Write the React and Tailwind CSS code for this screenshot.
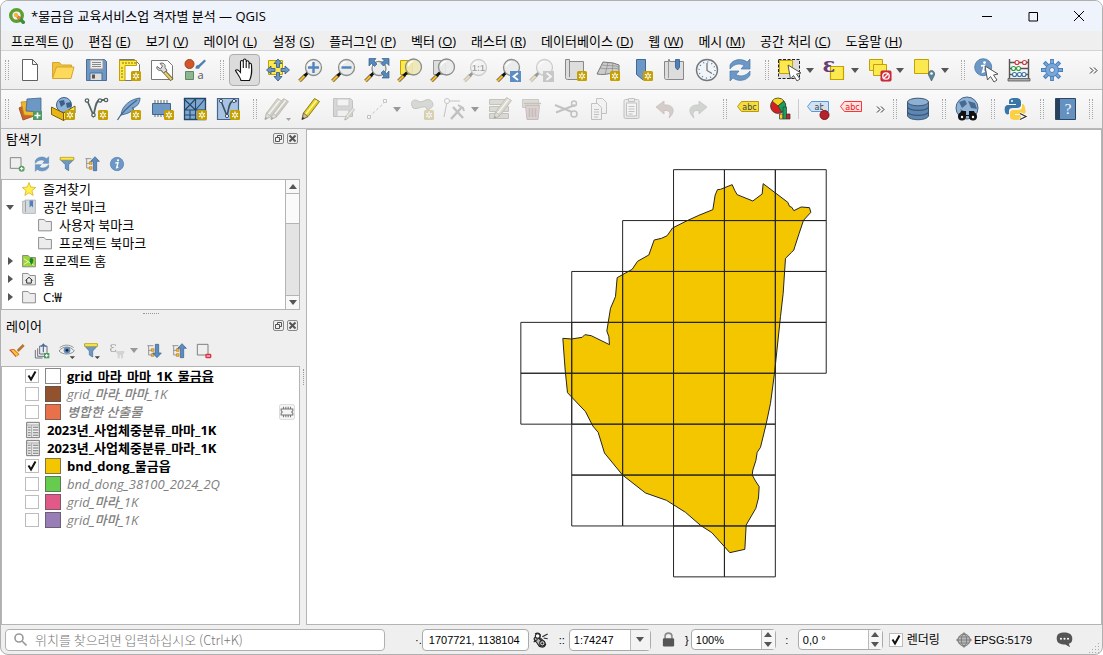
import { useState } from "react";
import clsx from "clsx";

/* =========================================================
   Shared icon parts
========================================================= */

function Svg({ size = 24, children }) {
  return (
    <svg width={size} height={size} viewBox="0 0 24 24" fill="none" className="shrink-0 overflow-visible" aria-hidden="true">
      {children}
    </svg>
  );
}

// the little yellow "new" badge in the lower right corner
function Badge() {
  return (
    <g>
      <rect x="14" y="13" width="10" height="10" rx="1.5" fill="#c4a000" />
      <path d="M19 14.5v7M16 16.2l6 3.6M22 16.2l-6 3.6" stroke="#fff" strokeWidth="1.3" />
      <circle cx="19" cy="18" r="1" fill="#c4a000" />
    </g>
  );
}

function Lens({ cx = 14.5, cy = 9.5, r = 8, fill = "#e8ebe9" }) {
  return (
    <g>
      <path d="M.5 23l6-6" stroke="#555" strokeWidth="3.6" />
      <path d="M.5 23l6-6" stroke="#fcbd1d" strokeWidth="2.2" />
      <path d="M5.500 18l3.500-3.500" stroke="#111" strokeWidth="2.8" />
      <circle cx={cx} cy={cy} r={r} fill={fill} fillOpacity="0.9" stroke="#8a8d88" strokeWidth="1.3" />
      <path d={`M${cx - 5.5} ${cy - 1}a6 6 0 0 1 5-4.5`} stroke="#fff" strokeWidth="1.3" />
    </g>
  );
}

function RefreshArt() {
  return (
    <g fill="#6d97c4" stroke="#4a78ad" strokeWidth="0.7">
      <path d="M2 11V7c3-6 12-7 17-3l3-3v10h-9l3-3.5c-4-2.500-10-2-14 3.500z" />
      <path d="M22 13v4c-3 6-12 7-17 3l-3 3V13h9l-3 3.500c4 2.500 10 2 14-3.500z" />
    </g>
  );
}

function Pencil({ fill = "#e8d01c" }) {
  return (
    <g>
      <path d="M3 22.500l1.500-6.500L15.500 1.500l5 3L9 19.500z" fill={fill} stroke="#77701f" strokeWidth="0.9" />
      <path d="M6.500 17.500L17.500 3.500" stroke="#fff6a0" strokeWidth="1.5" />
      <path d="M3 22.500l1.500-6.500 4.500 3.500z" fill="#d9b98d" stroke="#555" strokeWidth="0.7" />
      <path d="M3 22.500l.7-2.500 1.800 1.300z" fill="#222" />
    </g>
  );
}

function InfoArt() {
  return (
    <g>
      <circle cx="12" cy="12" r="10" fill="#6d97c4" stroke="#4d7db0" />
      <circle cx="13.500" cy="6.500" r="1.600" fill="#fff" />
      <path d="M9.500 10.500l4-.5-2 7.500 2.500-.8" stroke="#fff" strokeWidth="2" />
    </g>
  );
}

function Cursor() {
  return (
    <path d="M11 8l2.500 14 3-3.500 3.500 5.500 3-2-3.500-5 4.500-1z" fill="#fff" stroke="#555" />
  );
}

function TagArt({ fill, stroke, ink = "#444", text = "abc" }) {
  return (
    <g>
      <path d="M5.500 4.500h17v10h-17l-4-5z" fill={fill} stroke={stroke} />
      <text x="13.500" y="12.500" fontSize="8" textAnchor="middle" fill={ink} className="font-['DejaVu_Sans']">
        {text}
      </text>
    </g>
  );
}

const ICONS = {
  newProject: <path d="M4.500 1.500h10l5 5v16h-15zM14.500 1.500v5h5" fill="#fff" stroke="#606060" />,
  open: (
    <g stroke="#d4a72c">
      <path d="M1.500 20V4.500h7l2 2.500h10v3" fill="#f0c040" />
      <path d="M1.500 20.500l4-11.500h17.500l-3 11.500z" fill="#ffd95c" />
    </g>
  ),
  save: (
    <g>
      <path d="M2.500 1.500h18l2 2v19h-20z" fill="#6d97c4" stroke="#4b6f98" />
      <path d="M6 2h13v9H6z" fill="#eee" stroke="#999" />
      <path d="M8 4.500h9M8 6.500h9M8 8.500h9" stroke="#888" />
      <path d="M6 15h12v7.500H6z" fill="#ddd" stroke="#4b6f98" />
      <path d="M8 16.500h3v4H8z" fill="#555" />
    </g>
  ),
  newLayout: (
    <g>
      <path d="M2.500 1.500h15l5 5v16h-20z" fill="#fff" stroke="#777" />
      <path d="M2.500 2.500h17v5H8v15H2.500z" fill="#fce94f" stroke="#c4a000" />
      <path d="M6 4v2M9 4v2M12 4v2M15 4v2M18 4v2M4 10h2M4 13h2M4 16h2M4 19h2" stroke="#8f7600" />
      <Badge />
    </g>
  ),
  layouts: (
    <g>
      <path d="M1.500 2.500h16l5 5v14h-21z" fill="#fff" stroke="#777" />
      <path d="M12 11l10 11" stroke="#7a6a24" strokeWidth="4" />
      <path d="M13 12.500l8.500 9" stroke="#e3cb7c" strokeWidth="2.2" />
      <path d="M7 8.500l3.500 2.500 2-3L10 5.500c3-1.500 6 1 5 4l2 3-3.500 2.500-2-2.500c-3 .5-5.500-1.500-4.500-4z" fill="#ddd" stroke="#666" />
    </g>
  ),
  style: (
    <g>
      <circle cx="6.500" cy="6" r="4.500" fill="#d0562c" stroke="#a33d1a" />
      <path d="M12.500 10.500c0-3 1-3 3-3.500l6-5.500 1.500 1.500-6 6c-.5 2-2 2-4.500 1.500z" fill="#4f7fb3" />
      <path d="M2.500 13.500h8v8h-8z" fill="#8db591" stroke="#5b8a60" />
      <text x="17.500" y="21" fontSize="11" textAnchor="middle" fill="#555" className="font-['Open_Sans']">a</text>
    </g>
  ),
  hand: (
    <path
      d="M8 22.500c-1-4-4-7-5.500-10 1.500-1.500 3-.5 5 2V4c0-2 2.500-2 2.800 0V2.500c.3-2 2.600-2 2.900 0V4c.5-2 2.600-1.500 2.800.5V6c.5-1.500 2.500-1 2.500 1 .5 7 .5 10-2 15.500zM10.300 3v7M13.200 3.500V10M16 5v5.500"
      fill="#fff"
      stroke="#111"
      strokeWidth="1.1"
    />
  ),
  panSelection: (
    <g>
      <path d="M2.500 2.500h14v14h-14z" fill="#fce94f" stroke="#c4a000" />
      <path
        d="M12 1l4 4.500h-2.500v4h-3v-4H8zM12 23l4-4.500h-2.500v-4h-3v4H8zM.5 12L5 8v2.500h4v3H5V16zM23.500 12L19 8v2.500h-4v3h4V16z"
        fill="#6d97c4"
        stroke="#31557e"
        strokeWidth="0.8"
      />
    </g>
  ),
  zoomIn: (
    <g>
      <Lens />
      <path d="M14.500 4v11M9 9.500h11" stroke="#5384bd" strokeWidth="2.4" />
    </g>
  ),
  zoomOut: (
    <g>
      <Lens />
      <path d="M9.500 9.500h10" stroke="#5384bd" strokeWidth="2.4" />
    </g>
  ),
  zoomFull: (
    <g>
      <Lens cx={14} cy={10.5} r={7} />
      <path
        d="M4 .5h7L9 3l3 3-2.500 2.500-3-3L4 8zM24 .5v7L21.500 5l-3 3L16 5.500l3-3L17 .5zM24 20h-7l2-2-3-3 2.500-2.500 3 3L24 13z"
        fill="#5587bb"
        stroke="#35608f"
        strokeWidth="0.7"
      />
    </g>
  ),
  zoomSelection: (
    <g>
      <path d="M2.500 2.500h12v14h-12z" fill="#fce94f" stroke="#c4a000" />
      <Lens cx={15.5} cy={9} fill="#ece7b8" />
    </g>
  ),
  zoomLayer: (
    <g>
      <path d="M2.500 2.500h12v14h-12z" fill="#ddd" stroke="#999" />
      <Lens cx={15.5} cy={9} />
    </g>
  ),
  zoomNative: (
    <g>
      <Lens />
      <text x="14.500" y="13" fontSize="9" fontWeight="bold" textAnchor="middle" fill="#333" className="font-['Liberation_Sans']">1:1</text>
    </g>
  ),
  zoomLast: (
    <g>
      <Lens />
      <path d="M13 13h11v11H13z" fill="#5c8dc3" />
      <path d="M21 15l-4.500 3.500L21 22" stroke="#fff" strokeWidth="1.8" />
    </g>
  ),
  zoomNext: (
    <g>
      <Lens />
      <path d="M13 13h11v11H13z" fill="#888" />
      <path d="M16.500 15l4.500 3.500-4.500 3.500" stroke="#fff" strokeWidth="1.8" />
    </g>
  ),
  newMap: (
    <g>
      <path d="M2.500 1.500h4v2h14v18h-16c-2 0-2-1-2-3z" fill="#ddd" stroke="#888" />
      <path d="M6.500 2v17" stroke="#888" />
      <Badge />
    </g>
  ),
  newMap3d: (
    <g>
      <path d="M1 16L7 4l10 1 6 2v9c-6-3-12 2-22 0z" fill="#ccc" stroke="#777" />
      <path d="M4 10c6 2 13-1 19 1M12 4.500L9 17M17 5l-1 11M6 7c6 1 12 0 17 2" stroke="#888" strokeWidth="0.7" />
      <Badge />
    </g>
  ),
  newBookmark: (
    <g>
      <path d="M7.500 1.500h9v20h-3l-6-5z" fill="#6d97c4" stroke="#3d6897" />
      <Badge />
    </g>
  ),
  bookmarks: (
    <g>
      <path d="M2.500 3.500h4v-2h1v2h14v18h-17c-2 0-2-1-2-3z" fill="#ddd" stroke="#888" />
      <path d="M6.500 3v17" stroke="#999" />
      <path d="M13.500 1.500h4v8l-2 2.500-2-2.500z" fill="#4f80b8" stroke="#315a88" strokeWidth="0.8" />
    </g>
  ),
  clock: (
    <g>
      <circle cx="12" cy="12" r="10.500" fill="#f2f5f8" stroke="#777" strokeWidth="1.4" />
      <circle cx="12" cy="12" r="8" stroke="#5384bd" strokeWidth="1.5" strokeDasharray="1 3.2" />
      <path d="M12 5v7.500l5 3" stroke="#777" strokeWidth="1.3" />
    </g>
  ),
  refresh: <RefreshArt />,
  select: (
    <g>
      <path d="M.5 1.500h21v19H.5z" fill="#ddd" stroke="#222" strokeDasharray="3 1.5" />
      <path d="M1.500 2.500h13v13h-13z" fill="#fce94f" stroke="#c4a000" />
      <g transform="translate(-1 -1)"><Cursor /></g>
    </g>
  ),
  selectExpr: (
    <g>
      <path d="M7.500 8.500h13v13h-13z" fill="#fce94f" stroke="#c4a000" strokeWidth="1.2" />
      <text x="6" y="14" fontSize="21" fontWeight="bold" textAnchor="middle" fill="#6a3d74" className="font-['DejaVu_Serif']">ε</text>
    </g>
  ),
  deselect: (
    <g stroke="#c4a000">
      <path d="M1.500 1.500h13v11h-13z" fill="#fce94f" />
      <path d="M5.500 6.500h13v11h-13z" fill="#fce94f" />
      <rect x="13" y="13" width="10" height="10" rx="1" fill="#dc3545" stroke="#b61f2e" />
      <circle cx="18" cy="18" r="3.200" stroke="#fff" strokeWidth="1.3" />
      <path d="M16 20l4-4" stroke="#fff" strokeWidth="1.3" />
    </g>
  ),
  selectLocation: (
    <g>
      <path d="M1.500 1.500h14v14h-14z" fill="#fce94f" stroke="#c4a000" />
      <path d="M18.500 23l-3-6c-1-6 7-6 6 0z" fill="#5f8296" stroke="#426274" strokeWidth="0.7" />
      <circle cx="18.500" cy="15.500" r="1.300" fill="#fff" />
    </g>
  ),
  identify: (
    <g>
      <g transform="translate(-1 -1) scale(.85)"><InfoArt /></g>
      <Cursor />
    </g>
  ),
  abacus: (
    <g>
      <path d="M2.500 1v20M21.500 1v20M2 4.500h20M2 10.500h20M2 16.500h20" stroke="#555" strokeWidth="1.4" />
      <path d="M1 20.500h22v2.500H1z" fill="#aaa" stroke="#555" strokeWidth="0.8" />
      <g fill="#fff" strokeWidth="1.1">
        <g stroke="#d33"><circle cx="10" cy="4.500" r="2" /><circle cx="17.500" cy="4.500" r="2" /></g>
        <g stroke="#2a9a3c"><circle cx="6.500" cy="10.500" r="2" /><circle cx="11.500" cy="10.500" r="2" /></g>
        <g stroke="#3a6fa8"><circle cx="7.500" cy="16.500" r="2" /><circle cx="12.500" cy="16.500" r="2" /><circle cx="17" cy="16.500" r="2" /></g>
      </g>
    </g>
  ),
  gear: (
    <g>
      <path d="M12 1v22M1 12h22M4.200 4.200l15.600 15.600M19.800 4.200L4.200 19.800" stroke="#4a7fbf" strokeWidth="3.8" />
      <path d="M12 2v20M2 12h20M5 5l14 14M19 5L5 19" stroke="#7ba7d6" strokeWidth="2" />
      <circle cx="12" cy="12" r="6.500" fill="#7ba7d6" stroke="#4a7fbf" />
      <circle cx="12" cy="12" r="2.500" fill="#f4f4f4" stroke="#4a7fbf" />
    </g>
  ),
  dataSource: (
    <g>
      <path d="M1 11l10-5 5 13-11 4z" fill="#c8612c" stroke="#9a431a" strokeWidth="0.8" />
      <path d="M3 5l14-1v15L6 18z" fill="#f0b72c" stroke="#b98511" strokeWidth="0.8" />
      <path d="M9 2l14-1v14l-15-1z" fill="#6d97c4" stroke="#41658d" strokeWidth="0.8" />
      <path d="M15 14h9v9h-9z" fill="#4f9a63" />
      <path d="M19.500 15.500v6M16.500 18.500h6" stroke="#fff" strokeWidth="1.6" />
    </g>
  ),
  geopackage: (
    <g>
      <circle cx="13" cy="8" r="7.500" fill="#8fb2d6" stroke="#3b5f87" />
      <path d="M8 4l5-1 1 4-4 3zM15 6l5-1v5l-4 1z" fill="#3b5f87" />
      <path d="M.5 10l12 6v7.500l-12-6z" fill="#e8b416" stroke="#6d5600" strokeWidth="0.9" />
      <path d="M24 9l-11.500 7v7.500L24 16z" fill="#ffe450" stroke="#6d5600" strokeWidth="0.9" />
      <Badge />
    </g>
  ),
  newShape: (
    <g>
      <g stroke="#556666" strokeWidth="1.3">
        <path d="M3 3l6.500 15.500c2-8 2-15 6.500-15.500h5" strokeWidth="1.8" />
        <g fill="#fff">
          <circle cx="3" cy="3.500" r="1.700" />
          <circle cx="9.500" cy="18" r="1.700" />
          <circle cx="16" cy="3.500" r="1.700" />
          <circle cx="22" cy="3" r="1.700" />
        </g>
      </g>
      <Badge />
    </g>
  ),
  feather: (
    <g>
      <path d="M4 18C5 8 14 2 23 1c0 5-3 8-5 9l-3 1 2 1c-4 4-8 5-13 6z" fill="#7fa6cf" stroke="#3e668f" strokeWidth="0.9" />
      <path d="M.5 23C5 15 12 9 20 3" stroke="#3e668f" strokeWidth="1.2" />
      <Badge />
    </g>
  ),
  memoryLayer: (
    <g>
      <path d="M5 3v17M8 3v17M11 3v17M14 3v17M17 3v17" stroke="#666" />
      <path d="M2.500 6.500h18v11h-18z" fill="#6d97c4" stroke="#3e668f" />
      <Badge />
    </g>
  ),
  mesh: (
    <g>
      <path d="M1.500 1.500h21v21h-21z" fill="#7fa6cf" stroke="#234769" strokeWidth="1.3" />
      <path d="M12.500 1v22M1 13h21M1 2l11.500 11M12.500 2L2 13M12.500 13L22 2M7 13v9M1 18h12" stroke="#234769" strokeWidth="1.1" />
      <Badge />
    </g>
  ),
  virtualLayer: (
    <g>
      <path d="M1.500 1.500h21v21h-21z" fill="#a9c4e2" stroke="#41658d" strokeWidth="1.2" />
      <path d="M5 4l6 15c2-8 2-14 6-15h4" stroke="#3b4f62" strokeWidth="1.6" />
      <g fill="#fff" stroke="#3b4f62">
        <circle cx="5" cy="4" r="1.600" />
        <circle cx="11" cy="19" r="1.600" />
        <circle cx="18" cy="4" r="1.600" />
      </g>
      <Badge />
    </g>
  ),
  edits: (
    <g>
      <g transform="translate(2 0)"><Pencil fill="#888" /></g>
      <g transform="translate(-4 0)"><Pencil fill="#999" /></g>
      <path d="M20 21h5l-2.500 3z" fill="#333" />
    </g>
  ),
  pencil: <Pencil />,
  saveEdits: (
    <g>
      <path d="M1.500 1.500h17l2 2v16h-19z" fill="#aaa" stroke="#777" />
      <path d="M5 2h12v7H5zM5 13h12v6.500H5z" fill="#eee" stroke="#888" />
      <g transform="translate(11 10) scale(.58)"><Pencil fill="#aaa" /></g>
    </g>
  ),
  line: (
    <g stroke="#777">
      <path d="M4 20L21 4" strokeDasharray="3 2" />
      <path d="M2.500 18.500h3v3h-3zM18.500 2.500h3v3h-3z" fill="#fff" />
    </g>
  ),
  polygon: (
    <g>
      <path d="M3 11C-1 5 4 1 8 4s8-3 12-1c5 3 3 8-1 9l-1 3-2-5c-5-1-9 3-13 1z" fill="#a9b09a" stroke="#777" />
      <Badge />
    </g>
  ),
  vertex: (
    <g stroke="#777">
      <path d="M4 5L1 20M5 4h12" />
      <circle cx="4" cy="4" r="2.500" fill="#fff" />
      <path d="M8 22L19 10M10 10l10 11" strokeWidth="2.500" />
      <path d="M15 8l5 3 1 3" strokeWidth="2" />
    </g>
  ),
  modify: (
    <g>
      <path d="M1.500 2.500h19v5h-19zM1.500 9.500h19v5h-19zM1.500 16.500h19v5h-19z" fill="#b8b68e" stroke="#777" />
      <g transform="translate(3 -1)"><Pencil fill="#aaa" /></g>
    </g>
  ),
  trash: (
    <g>
      <path d="M1.500 2.500h16v8h-16z" fill="#b8b68e" stroke="#888" />
      <path d="M4.500 8.500h14l-1.500 14H6z" fill="#cc9999" stroke="#996666" />
      <path d="M3 6.500h17M8.500 11v9M11.500 11v9M14.500 11v9" stroke="#996666" strokeWidth="1.6" />
    </g>
  ),
  cut: (
    <g stroke="#777" strokeWidth="1.5">
      <path d="M1 8l17 7M2 15.500L21 8" strokeWidth="2" />
      <circle cx="20" cy="6.500" r="2.500" />
      <circle cx="20" cy="17" r="3" />
    </g>
  ),
  copy: (
    <g fill="#eee" stroke="#777">
      <path d="M9.500 1.500h6l4 4v11h-10z" />
      <path d="M4.500 6.500h6l4 4v12h-10z" />
      <path d="M7 12.500h5M7 15h5M7 17.500h5M7 20h4" />
    </g>
  ),
  paste: (
    <g fill="#ddd" stroke="#777">
      <rect x="4" y="2.500" width="15" height="19" rx="1.5" />
      <path d="M6.500 6h10v13h-10z" fill="#f5f5f5" />
      <path d="M8.500 1.500h6v3h-6zM8.500 9.500h6M8.500 12h6M8.500 14.500h6M8.500 17h4" />
    </g>
  ),
  undo: <path d="M3 10l8-6v4c10-1 12 7 5 13 2-5 1-8-5-7.500V17z" fill="#b88f78" stroke="#996677" strokeWidth="0.8" />,
  redo: <path d="M21 10l-8-6v4C3 7 1 15 8 21c-2-5-1-8 5-7.500V17z" fill="#9aa69a" stroke="#778888" strokeWidth="0.8" />,
  label: <TagArt fill="#f4dc3c" stroke="#b99a0c" />,
  diagram: (
    <g stroke="#333" strokeWidth="0.7">
      <circle cx="9" cy="9" r="7.500" fill="#d42020" />
      <path d="M9 9L3 4a7.500 7.500 0 0 1 12 0z" fill="#f7d51d" />
      <path d="M9 9l6-5a7.500 7.500 0 0 1-2 11.500z" fill="#18a05a" />
      <path d="M10.500 17h3.500v5h-3.500z" fill="#f7d51d" />
      <path d="M14 10h3.500v12H14z" fill="#18a05a" />
      <path d="M17.500 17H21v5h-3.500z" fill="#d42020" />
    </g>
  ),
  pinLabel: (
    <g>
      <TagArt fill="#cfe3f7" stroke="#5b96d6" text="ab" />
      <path d="M18.500 9v7" stroke="#ddd" strokeWidth="3" />
      <circle cx="18.500" cy="18" r="4.500" fill="#b5222b" stroke="#811018" />
    </g>
  ),
  redLabel: <TagArt fill="#ffe2e2" stroke="#ff3333" ink="#e12020" />,
  database: (
    <g stroke="#3d5874">
      <path d="M1.500 5v14c2 5 19 5 21 0V5z" fill="#5d86b3" />
      <ellipse cx="12" cy="5" rx="10.500" ry="3.800" fill="#8eb0d2" />
      <path d="M1.500 10c2 4.500 19 4.500 21 0M1.500 15c2 4.500 19 4.500 21 0" strokeWidth="1.2" />
    </g>
  ),
  metasearch: (
    <g>
      <circle cx="12" cy="11" r="11" fill="#92b3d5" stroke="#42648b" />
      <path d="M4 5l6-2 2 4-5 4zM13 4l7 2 2 6-6-1zM5 12l4 2-1 3z" fill="#466b93" />
      <circle cx="7" cy="19.500" r="4" fill="#111" />
      <circle cx="18" cy="19.500" r="4" fill="#111" />
      <path d="M6 14h5v4h3v-4h5l2 5H4z" fill="#111" />
      <circle cx="7" cy="20" r="1.200" fill="#fff" />
      <circle cx="18" cy="20" r="1.200" fill="#fff" />
    </g>
  ),
  python: (
    <g>
      <path d="M11 1c-5 0-6 1-6 4v2h7v1H4c-3 0-4 3-3 7 .5 2 2 3 4 2v-3c0-2 1-3 4-3h4c2 0 4-1 4-3V5c0-3-2-4-6-4z" fill="#3a75a8" />
      <circle cx="8" cy="4" r="1" fill="#fff" />
      <path d="M18 7v3c0 2-1 3-4 3h-4c-3 0-4 1-4 4v3c0 2 2 3 6 3s5-1 5-3v-2h-6v-1h8c3 0 3-2 2-6-.5-3-1-4-3-4z" fill="#fbd044" />
      <path d="M16 16.500l6 3-6 3" stroke="#fff" strokeWidth="3" />
      <path d="M16 16.500l6 3-6 3" stroke="#333" strokeWidth="1.3" />
    </g>
  ),
  help: (
    <g>
      <path d="M2.500 1.500h20v21h-20z" fill="#6591c1" stroke="#2c4663" />
      <path d="M3 2h4v20H3z" fill="#27405c" />
      <text x="15" y="17" fontSize="15" textAnchor="middle" fill="#fff" className="font-['Liberation_Serif']">?</text>
    </g>
  ),
  /* panel icons */
  addLayer: (
    <g>
      <path d="M2 2.500h16v16H2z" stroke="#777" strokeWidth="1.3" />
      <circle cx="19" cy="19" r="4.500" fill="#5d9b68" />
      <path d="M19 16.500v5M16.500 19h5" stroke="#fff" strokeWidth="1.5" />
    </g>
  ),
  filter: (
    <g>
      <path d="M2 2.500h20v3L14.500 13v9l-5-3v-6L2 5.500z" fill="#6d97c4" stroke="#3e6a9b" />
      <path d="M2 2h20v4H2z" fill="#fce94f" stroke="#c4a000" />
    </g>
  ),
  filterMenu: (
    <g>
      <path d="M1 1.500h19v3L13 12v9l-5-3v-6L1 4.500z" fill="#6d97c4" stroke="#3e6a9b" />
      <path d="M1 1h19v4H1z" fill="#fce94f" stroke="#c4a000" />
      <path d="M16 20h8l-4 4z" fill="#444" />
    </g>
  ),
  collapse: (
    <g>
      <path d="M2 4h9M4 4v14h6M4 11h5" stroke="#888" strokeWidth="1.3" />
      <path d="M8 8.500h4v4H8zM8 16h4v4H8z" fill="#f5b83d" stroke="#c47f12" />
      <path d="M16.500 1l6.500 7h-4v14h-5V8h-4z" fill="#5d8cc0" stroke="#315c8b" />
    </g>
  ),
  expand: (
    <g>
      <path d="M2 4h9M4 4v14h6M4 11h5" stroke="#888" strokeWidth="1.3" />
      <path d="M8 8.500h4v4H8zM8 16h4v4H8z" fill="#f5b83d" stroke="#c47f12" />
      <path d="M16.500 22l6.500-7h-4V2h-5v13h-4z" fill="#5d8cc0" stroke="#315c8b" />
    </g>
  ),
  info: <InfoArt />,
  brush: (
    <g>
      <path d="M13 12l9-9" stroke="#b9742e" strokeWidth="4" />
      <path d="M8 9l8 8-3 3-8-8z" fill="#e2c14e" />
      <path d="M0 10l7-1 8 8-5 4C7 17 4 14 0 10z" fill="#d9412b" />
      <path d="M3 11l4-1 7 7-3 3z" fill="#f5c933" />
    </g>
  ),
  addGroup: (
    <g stroke="#666677">
      <path d="M8.500 4.500h11v12h-11zM5.500 8v12h10M2 10.500v12h11" strokeWidth="1.4" />
      <path d="M14 14V2M10.500 5.500L14 1.500l3.500 4" stroke="#3f6c9d" strokeWidth="1.7" />
      <path d="M15 15h8v8h-8z" fill="#4f9a63" stroke="none" />
      <path d="M19 16.500v5M16.500 19h5" stroke="#fff" strokeWidth="1.5" />
    </g>
  ),
  eye: (
    <g>
      <path d="M0 12C6 4 17 4 23 12c-6 6-17 6-23 0z" fill="#f0f0f0" stroke="#777" strokeWidth="1.2" />
      <circle cx="12" cy="11" r="5" fill="#5d8cc0" />
      <circle cx="12" cy="11" r="2" fill="#222" />
      <path d="M1 7c6-5 15-5 21 0" stroke="#888" strokeWidth="1.3" />
      <path d="M16 20h8l-4 4z" fill="#444" />
    </g>
  ),
  exprFilter: (
    <g>
      <text x="6" y="14" fontSize="22" textAnchor="middle" fill="#444" className="font-['DejaVu_Serif']">ε</text>
      <path d="M11 12h12v3l-2 2v6h-3v-5h-2v5h-3v-6l-2-2z" fill="#aaa" />
    </g>
  ),
  removeLayer: (
    <g>
      <path d="M2 2h16v16H2z" stroke="#777" strokeWidth="1.4" />
      <rect x="14" y="16" width="9" height="7" rx="2" fill="#dc3545" />
      <path d="M16 19.500h5" stroke="#fff" strokeWidth="1.5" />
    </g>
  ),
  star: <path d="M12 1l3.200 7.800 8.300.6-6.400 5.400 2 8.200-7.100-4.500L4.900 23l2-8.200L.5 9.400l8.300-.6z" fill="#fff04a" stroke="#d3ad1b" strokeWidth="1.3" />,
  bookmarkBook: (
    <g>
      <path d="M1 2h4V0h18v23H3c-2 0-2-1-2-3z" fill="#d5d9de" stroke="#999" />
      <path d="M6 2v19" stroke="#999" strokeWidth="1.5" />
      <path d="M13 1h6v12l-3-3-3 3z" fill="#4f80b8" />
    </g>
  ),
  folder: <path d="M1 22V2.500h9.500l3 3.500h9.500v16z" fill="#ececec" stroke="#888" strokeWidth="1.600" />,
  projectHome: (
    <g>
      <path d="M1 22V2.500h9.500l3 3.500h9.500v16z" fill="#9cd63a" stroke="#777" strokeWidth="1.400" />
      <path d="M3 8l9 6 9 6M3 18l8-5" stroke="#e9f6ba" strokeWidth="1.700" />
      <path d="M16 19c-5-8-3-12 0-12s6 4 0 12z" fill="#168a26" />
    </g>
  ),
  home: (
    <g>
      <path d="M1 22V2.500h9.500l3 3.500h9.500v16z" fill="#ececec" stroke="#888" strokeWidth="1.600" />
      <path d="M6 14.500L12 9l6 5.500M8 13.500V19h8v-5.500" stroke="#222" strokeWidth="1.600" />
    </g>
  ),
  table: (
    <g>
      <path d="M2.500.5h19v23h-19z" fill="#eee" stroke="#777" strokeWidth="1.5" />
      <path d="M2 4.500h20M10 5v18" stroke="#888" />
      <path d="M4.500 8h4M12 8h8M4.500 12h4M12 12h8M4.500 16h4M12 16h8M4.500 20h4M12 20h8" stroke="#777" strokeWidth="1.6" />
    </g>
  ),
  chip: (
    <g stroke="#777" strokeWidth="1.8">
      <path d="M6 3v18M10 3v18M14 3v18M18 3v18" />
      <path d="M2 7h20v3l-2 2 2 2v3H2v-3l2-2-2-2z" fill="#f5f5f5" />
    </g>
  ),
  mouse: (
    <g stroke="#222" strokeWidth="1.6">
      <path d="M3 3c5-3 9 0 8 4M2 9c4-6 14 2 17 10-2 6-10 4-12-1C5 14 0 12 2 9z" fill="#bbb" />
      <path d="M5 6l13 12M14 7l8-4M1 15l6-4M16 9l6 1" />
      <circle cx="14" cy="17" r="4" fill="#f3e9e9" />
      <circle cx="7" cy="6" r="3.500" fill="#fff" />
      <circle cx="14" cy="17" r="1" />
    </g>
  ),
  lock: (
    <g>
      <path d="M6.500 12V7c0-7 11-7 11 0v5" stroke="#888" strokeWidth="2.5" />
      <rect x="3" y="10" width="18" height="13" rx="2" fill="#555" />
    </g>
  ),
  globe: (
    <g stroke="#777" strokeWidth="1.3">
      <path d="M12 0l12 12-12 12L0 12z" fill="#999" stroke="none" />
      <circle cx="12" cy="12" r="9" fill="#bbb" />
      <ellipse cx="12" cy="12" rx="4" ry="9" />
      <path d="M1 12h22M4 7.500h16M4 16.500h16" />
    </g>
  ),
  chat: (
    <g>
      <path d="M12 2c7 0 11 3 11 8.500s-2 6.500-5 7.500l2 5-7-4C6 19 1 17 1 10.500S5 2 12 2z" fill="#555" />
      <circle cx="7" cy="11" r="1.500" fill="#fff" />
      <circle cx="12" cy="11" r="1.500" fill="#fff" />
      <circle cx="17" cy="11" r="1.500" fill="#fff" />
    </g>
  ),
};

/* =========================================================
   Data
========================================================= */

const MENUS = [
  ["프로젝트", "J"], ["편집", "E"], ["보기", "V"], ["레이어", "L"], ["설정", "S"],
  ["플러그인", "P"], ["벡터", "O"], ["래스터", "R"], ["데이터베이스", "D"],
  ["웹", "W"], ["메시", "M"], ["공간 처리", "C"], ["도움말", "H"],
];

const TREE = [
  { label: "즐겨찾기", icon: "star" },
  { label: "공간 북마크", icon: "bookmarkBook", open: true },
  { label: "사용자 북마크", icon: "folder", child: true },
  { label: "프로젝트 북마크", icon: "folder", child: true },
  { label: "프로젝트 홈", icon: "projectHome", closed: true },
  { label: "홈", icon: "home", closed: true },
  { label: "C:₩", icon: "folder", closed: true },
];

const LAYERS = [
  { name: "grid_마라_마마_1K_물금읍", color: "bg-white", on: true, active: true },
  { name: "grid_마라_마마_1K", color: "bg-[#91522d]" },
  { name: "병합한 산출물", color: "bg-[#e8714a]", memory: true },
  { name: "2023년_사업체중분류_마마_1K", table: true },
  { name: "2023년_사업체중분류_마라_1K", table: true },
  { name: "bnd_dong_물금읍", color: "bg-[#f4c600]", on: true },
  { name: "bnd_dong_38100_2024_2Q", color: "bg-[#65cc50]" },
  { name: "grid_마라_1K", color: "bg-[#e15989]" },
  { name: "grid_마마_1K", color: "bg-[#987db7]" },
];

// first column and cell count of every grid row
const GRID_ROWS = [[3, 3], [2, 4], [1, 5], [0, 6], [0, 5], [1, 4], [1, 4], [3, 2]];

const BOUNDARY =
  "651,119 660,118 695,104 703,122 710,134 757,153 785,132 788,101 862,157 867,169 874,172 880,182 902,171 927,173 931,187 909,211 896,250 883,290 880,300 872,308 855,325 848,430 840,500 822,670 810,760 797,822 780,892 770,907 766,932 757,960 755,975 765,993 776,1010 774,1044 766,1075 737,1125 733,1198 688,1208 634,1148 600,1126 555,1087 498,1051 435,1029 366,975 312,909 293,847 277,828 255,785 201,728 194,660 187,565 213,567 245,562 253,554 272,557 327,584 325,560 319,543 330,475 345,440 350,383 395,358 411,334 445,315 461,270 483,265 500,257 516,234 560,212 595,196 637,179 644,135";

/* =========================================================
   Toolbars
========================================================= */

function Arrow({ up, muted }) {
  return (
    <svg width="8" height="5" viewBox="0 0 8 5" className="shrink-0" aria-hidden="true">
      <path d={up ? "M0 5l4-5 4 5z" : "M0 0h8L4 5z"} fill={muted ? "#999" : "#555"} />
    </svg>
  );
}

function Group({ wide, children }) {
  return (
    <div className={clsx("flex shrink-0 items-center", wide && "pr-px")}>
      <div className="flex w-3 justify-center">
        <div className="h-5 w-1 border-x border-dotted border-[#a8a8a8]"></div>
      </div>
      {children}
    </div>
  );
}

function Tool({ icon, active, disabled, menu }) {
  return (
    <button
      type="button"
      aria-label={icon}
      disabled={disabled}
      className={clsx("flex h-8 shrink-0 items-center", menu ? "w-[45px]" : "w-[33px]")}
    >
      <span
        className={clsx(
          "mx-px flex h-8 w-[31px] items-center justify-center rounded-sm",
          active && "border border-[#adadad] bg-[#dcdcdc]",
          disabled && "opacity-40 grayscale-50"
        )}
      >
        <Svg>{ICONS[icon]}</Svg>
      </span>
      {menu && <Arrow muted={disabled} />}
    </button>
  );
}

function Tools({ names, ...rest }) {
  return names.map((name) => <Tool key={name} icon={name} {...rest} />);
}

function More() {
  return (
    <button type="button" aria-label="more" className="flex h-8 w-[18px] shrink-0 items-center justify-end">
      <svg width="9" height="7" viewBox="0 0 9 7" fill="none" stroke="#333" aria-hidden="true">
        <path d="M1 .5l3 3-3 3M5 .5l3 3-3 3" />
      </svg>
    </button>
  );
}

function Toolbar({ children }) {
  return (
    <div className="flex h-[39px] shrink-0 items-center gap-1 border-b border-[#b9b9b9] bg-linear-to-b from-[#fafafa] to-[#eeeeee]">
      {children}
    </div>
  );
}

/* =========================================================
   Panels
========================================================= */

function PanelTitle({ children }) {
  return (
    <div className="flex h-[19px] shrink-0 items-center justify-between pr-0.5 pl-[5px]">
      <h2>{children}</h2>
      <div className="flex gap-[3px]">
        <button type="button" aria-label="float" className="rounded-xs border border-[#888] text-[#555]">
          <svg width="9" height="9" viewBox="0 0 9 9" fill="none" stroke="currentColor" aria-hidden="true">
            <path d="M3.500 3V1.500h4v4H6M1.500 3.500h4v4h-4z" />
          </svg>
        </button>
        <button type="button" aria-label="close panel" className="rounded-xs border border-[#888] text-[#555]">
          <svg width="9" height="9" viewBox="0 0 9 9" stroke="currentColor" strokeWidth="2" aria-hidden="true">
            <path d="M1.500 1.500l6 6M7.500 1.500l-6 6" />
          </svg>
        </button>
      </div>
    </div>
  );
}

function PanelTool({ icon, disabled, menu }) {
  return (
    <button
      type="button"
      aria-label={icon}
      disabled={disabled}
      className={clsx("flex h-6 items-center gap-px", menu ? "w-[37px]" : "w-[25px]")}
    >
      <span className={clsx("flex w-[25px] justify-center", disabled && "opacity-40 grayscale")}>
        <Svg size={16}>{ICONS[icon]}</Svg>
      </span>
      {menu && <Arrow muted />}
    </button>
  );
}

function PanelTools({ children }) {
  return <div className="flex h-[31px] shrink-0 items-center pl-[3px]">{children}</div>;
}

function BrowserPanel() {
  return (
    <section className="flex shrink-0 flex-col">
      <PanelTitle>탐색기</PanelTitle>
      <PanelTools>
        {["addLayer", "refresh", "filter", "collapse", "info"].map((name) => (
          <PanelTool key={name} icon={name} />
        ))}
      </PanelTools>
      <div className="flex h-[131px] border border-[#b4b4b4] bg-white">
        <ul className="flex-1 overflow-hidden">
          {TREE.map((item) => (
            <li key={item.label} className={clsx("flex h-[18px] items-center", item.child && "pl-4")}>
              <span className="flex w-5 shrink-0 items-center pl-1">
                {item.open && <Arrow />}
                {item.closed && (
                  <svg width="5" height="8" viewBox="0 0 5 8" className="ml-0.5" aria-hidden="true">
                    <path d="M0 0l5 4-5 4z" fill="#555" />
                  </svg>
                )}
              </span>
              <span className="flex w-[21px] shrink-0">
                <Svg size={14}>{ICONS[item.icon]}</Svg>
              </span>
              {item.label}
            </li>
          ))}
        </ul>
        <div className="flex w-3.5 flex-col border-l border-[#b4b4b4] bg-[#e4e4e4]">
          <button type="button" aria-label="scroll up" className="flex h-[14px] items-center justify-center border-b border-[#b4b4b4] bg-[#f8f8f8]">
            <Arrow up />
          </button>
          <div className="h-[30px] border-b border-[#b4b4b4] bg-[#fafafa]"></div>
          <div className="flex-1"></div>
          <button type="button" aria-label="scroll down" className="flex h-[14px] items-center justify-center border-t border-[#b4b4b4] bg-[#f8f8f8]">
            <Arrow />
          </button>
        </div>
      </div>
    </section>
  );
}

function Tick({ checked, onChange, label }) {
  return (
    <span className="relative flex h-3.5 w-3.5 shrink-0">
      <input
        type="checkbox"
        aria-label={label}
        checked={checked}
        onChange={onChange}
        className="h-3.5 w-3.5 appearance-none border border-[#bdbdbd] bg-white"
      />
      {checked && (
        <svg viewBox="0 0 14 14" fill="none" className="pointer-events-none absolute inset-0" aria-hidden="true">
          <path d="M3.500 6.500L6 10.500l4.500-8" stroke="#111" strokeWidth="2" />
        </svg>
      )}
    </span>
  );
}

function LayersPanel() {
  const [visible, setVisible] = useState(() => LAYERS.map((l) => !!l.on));

  const toggle = (i) => setVisible(visible.map((v, n) => (n === i ? !v : v)));

  return (
    <section className="flex min-h-0 flex-1 flex-col">
      <PanelTitle>레이어</PanelTitle>
      <PanelTools>
        {["brush", "addGroup", "eye", "filterMenu"].map((name) => (
          <PanelTool key={name} icon={name} />
        ))}
        <PanelTool icon="exprFilter" disabled menu />
        {["expand", "collapse", "removeLayer"].map((name) => (
          <PanelTool key={name} icon={name} />
        ))}
      </PanelTools>
      <ul className="flex-1 overflow-hidden border border-[#b4b4b4] bg-white">
        {LAYERS.map((layer, i) => (
          <li key={layer.name} className="flex h-[18px] items-center pr-1 pl-[23px]">
            {layer.table ? (
              <span className="flex w-[22px] shrink-0">
                <Svg size={16}>{ICONS.table}</Svg>
              </span>
            ) : (
              <>
                <Tick checked={visible[i]} onChange={() => toggle(i)} label={layer.name} />
                <span className={clsx("mr-1.5 ml-1.5 h-4 w-4 shrink-0 border border-[#555]/70", layer.color)}></span>
              </>
            )}
            <span
              className={clsx(
                "flex-1 whitespace-nowrap",
                layer.table || layer.on ? "font-bold" : "font-medium text-[#808080] italic",
                layer.active && "underline"
              )}
            >
              {layer.name}
            </span>
            {layer.memory && (
              <button type="button" aria-label="memory layer" className="flex h-4 w-4 items-center justify-center rounded-xs border border-[#ddd] bg-[#f5f5f5]">
                <Svg size={14}>{ICONS.chip}</Svg>
              </button>
            )}
          </li>
        ))}
      </ul>
    </section>
  );
}

/* =========================================================
   Map
========================================================= */

function MapCanvas() {
  return (
    <main className="min-w-0 flex-1 border border-[#b4b4b4] bg-white">
      <svg viewBox="0 0 793 494" preserveAspectRatio="xMidYMid meet" className="block h-full w-full" role="img" aria-label="물금읍">
        <g transform="translate(193 20) scale(.33333)" strokeLinejoin="round">
          <polygon points={BOUNDARY} fill="#f4c600" stroke="#232323" strokeWidth="3" />
          {GRID_ROWS.map(([start, count], row) =>
            Array.from({ length: count }, (_, n) => (
              <rect
                key={`${row}-${n}`}
                x={61 + (start + n) * 152.7}
                y={59 + row * 152.7}
                width="152.7"
                height="152.7"
                fill="none"
                stroke="#232323"
                strokeWidth="3"
              />
            ))
          )}
        </g>
      </svg>
    </main>
  );
}

/* =========================================================
   Status bar
========================================================= */

function Spin({ label, value }) {
  return (
    <div className="flex h-[21px] w-[85px] rounded-sm border border-[#aaa] bg-white">
      <input type="text" aria-label={label} defaultValue={value} className="w-0 flex-1 px-1" />
      <div className="flex w-3.5 flex-col border-l border-[#bbb] bg-[#f6f6f6]">
        <button type="button" aria-label="up" className="flex flex-1 items-center justify-center"><Arrow up /></button>
        <button type="button" aria-label="down" className="flex flex-1 items-center justify-center"><Arrow /></button>
      </div>
    </div>
  );
}

function StatusBar() {
  const [render, setRender] = useState(true);

  return (
    <footer className="flex h-[29px] shrink-0 items-center pr-px pl-1 font-['Liberation_Sans','Noto_Sans_CJK_KR',sans-serif] text-[11px]">
      <label className="flex h-[22px] min-w-0 flex-1 items-center gap-2 rounded-sm border border-[#b0b0b0] bg-white px-2">
        <svg width="13" height="13" viewBox="0 0 13 13" fill="none" stroke="#999" strokeWidth="1.6" aria-hidden="true">
          <circle cx="5" cy="5" r="4" />
          <path d="M8 8l4.500 4.500" />
        </svg>
        <input
          type="text"
          aria-label="위치"
          placeholder="위치를 찾으려면 입력하십시오 (Ctrl+K)"
          className="min-w-0 flex-1 font-['Noto_Sans_CJK_KR',sans-serif] text-[13px] font-light placeholder:text-[#777]"
        />
      </label>
      <span className="ml-7 w-[9px] text-right">·.</span>
      <input
        type="text"
        aria-label="좌표"
        defaultValue="1707721, 1138104"
        className="h-[22px] w-[107px] rounded-sm border border-[#aaa] bg-white px-1.5"
      />
      <button type="button" aria-label="extents" className="flex w-6 justify-center"><Svg size={16}>{ICONS.mouse}</Svg></button>
      <span className="w-4 pr-1 text-right">::</span>
      <div className="relative flex h-[22px] w-[82px]">
        <select aria-label="축척" className="w-full appearance-none rounded-sm border border-[#aaa] bg-white px-1">
          <option>1:74247</option>
        </select>
        <span className="pointer-events-none absolute inset-y-px right-px flex w-5 items-center justify-center border-l border-[#bbb] bg-[#f3f3f3]">
          <Arrow />
        </span>
      </div>
      <button type="button" aria-label="lock scale" className="flex w-9 justify-center"><Svg size={15}>{ICONS.lock}</Svg></button>
      <span className="flex w-1 justify-end pr-0.5">}</span>
      <Spin label="확대" value="100%" />
      <span className="w-[22px] text-center">:</span>
      <Spin label="회전" value="0,0 °" />
      <label className="ml-1.5 flex items-center gap-1 text-xs">
        <Tick checked={render} onChange={() => setRender(!render)} label="렌더링" />
        렌더링
      </label>
      <button type="button" className="ml-4 flex items-center gap-0.5">
        <Svg size={16}>{ICONS.globe}</Svg>
        EPSG:5179
      </button>
      <button type="button" aria-label="messages" className="mr-4 ml-6 flex"><Svg size={17}>{ICONS.chat}</Svg></button>
      <svg width="12" height="12" viewBox="0 0 12 12" className="self-end" stroke="#aaa" strokeDasharray="1 2" aria-hidden="true">
        <path d="M9 1.500h3M6 4.500h6M3 7.500h9M0 10.500h12" />
      </svg>
    </footer>
  );
}

/* =========================================================
   Window
========================================================= */

export default function App() {
  return (
    <div className="flex h-screen flex-col overflow-hidden rounded-lg border border-[#b0b0b0] bg-[#efefef] font-['Open_Sans','Noto_Sans_CJK_KR',sans-serif] text-[13px] leading-4 text-black">
      <header className="flex h-[30px] shrink-0 items-center bg-[#eff3fb] pl-2">
        <svg width="16" height="16" viewBox="0 0 16 16" fill="none" aria-hidden="true">
          <circle cx="7.500" cy="7.500" r="5.800" stroke="#5f9f2f" strokeWidth="3.4" />
          <path d="M9.500 9.500L15.500 15.500" stroke="#3d8f3a" strokeWidth="3.5" />
          <path d="M7 7l4 4" stroke="#ee7d31" strokeWidth="3" />
          <circle cx="7" cy="7" r="2.200" fill="#f5b53a" />
        </svg>
        <h1 className="ml-1.5 flex-1">*물금읍 교육서비스업 격자별 분석 — QGIS</h1>
        {["M0 5.500h10", "M1 1.500h8.500v8.500H1z", "M0 0l10 10M10 0L0 10"].map((d, i) => (
          <button key={d} type="button" aria-label={["minimise", "maximise", "close"][i]} className="flex h-full w-[46px] items-center justify-center">
            <svg width="11" height="11" viewBox="0 0 11 11" fill="none" stroke="#000" aria-hidden="true">
              <path d={d} />
            </svg>
          </button>
        ))}
      </header>

      <nav className="flex h-5 shrink-0 items-center gap-[15px] overflow-hidden border-b border-[#d4d4d4] pl-2.5 whitespace-nowrap">
        {MENUS.map(([label, key]) => (
          <button key={label} type="button">
            {label} (<u>{key}</u>)
          </button>
        ))}
      </nav>

      <Toolbar>
        <Group wide>
          <Tools names={["newProject", "open", "save", "newLayout", "layouts", "style"]} />
        </Group>
        <Group wide>
          <Tool icon="hand" active />
          <Tools names={["panSelection", "zoomIn", "zoomOut", "zoomFull", "zoomSelection", "zoomLayer"]} />
          <Tool icon="zoomNative" disabled />
          <Tool icon="zoomLast" />
          <Tool icon="zoomNext" disabled />
          <Tools names={["newMap", "newMap3d", "newBookmark", "bookmarks", "clock", "refresh"]} />
        </Group>
        <Group>
          <Tools names={["select", "selectExpr", "deselect", "selectLocation"]} menu />
        </Group>
        <Group>
          <Tools names={["identify", "abacus", "gear"]} />
        </Group>
        <div className="ml-auto pr-1">
          <More />
        </div>
      </Toolbar>

      <Toolbar>
        <Group wide>
          <Tools names={["dataSource", "geopackage", "newShape", "feather", "memoryLayer", "mesh", "virtualLayer"]} />
        </Group>
        <Group wide>
          <Tool icon="edits" disabled />
          <Tool icon="pencil" />
          <Tool icon="saveEdits" disabled />
          <Tool icon="line" disabled menu />
          <Tool icon="polygon" disabled />
          <Tool icon="vertex" disabled menu />
          <Tools names={["modify", "trash", "cut", "copy", "paste", "undo", "redo"]} disabled />
        </Group>
        <Group>
          <Tools names={["label", "diagram"]} />
          <div className="mr-0.5 ml-px h-5 w-px bg-[#ccc]"></div>
          <Tools names={["pinLabel", "redLabel"]} />
          <More />
        </Group>
        <Group><Tool icon="database" /></Group>
        <Group><Tool icon="metasearch" /></Group>
        <Group><Tool icon="python" /></Group>
        <Group><Tool icon="help" /></Group>
        <Group />
      </Toolbar>

      <div className="flex min-h-0 flex-1">
        <aside className="flex w-[299px] shrink-0 flex-col">
          <BrowserPanel />
          <div className="flex h-1.5 shrink-0 items-center justify-center">
            <div className="w-4 border-t border-dotted border-[#999]"></div>
          </div>
          <LayersPanel />
        </aside>
        <div className="flex w-1.5 shrink-0 items-center justify-center">
          <div className="h-4 border-l border-dotted border-[#999]"></div>
        </div>
        <MapCanvas />
      </div>

      <StatusBar />
    </div>
  );
}
